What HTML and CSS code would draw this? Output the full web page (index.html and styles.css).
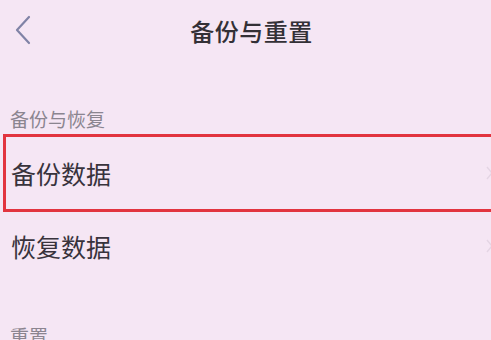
FILE: index.html
```html
<!DOCTYPE html>
<html lang="zh-CN">
<head>
<meta charset="utf-8">
<title>备份与重置</title>
<link rel="stylesheet" href="styles.css">
</head>
<body>
<div class="page">
  <header class="header">
    <span class="back">
      <svg width="20" height="30" viewBox="0 0 20 30"><path d="M15 2 L3 15 L15 28" fill="none" stroke="#8083a6" stroke-width="2.2" stroke-linecap="round" stroke-linejoin="round"/></svg>
    </span>
    <h1 class="title">备份与重置</h1>
    <span class="spacer"></span>
  </header>

  <div class="section-label first">备份与恢复</div>
  <div class="row row-selected">
    <span class="row-text">备份数据</span>
    <svg class="chev" width="8" height="16" viewBox="0 0 8 16"><path d="M2 2 L7 8 L2 14" fill="none" stroke="#e4d5e4" stroke-width="1.4"/></svg>
  </div>
  <div class="row row-plain">
    <span class="row-text">恢复数据</span>
    <svg class="chev" width="8" height="16" viewBox="0 0 8 16"><path d="M2 2 L7 8 L2 14" fill="none" stroke="#e4d5e4" stroke-width="1.4"/></svg>
  </div>

  <div class="section-label second">重置</div>
</div>
</body>
</html>
```
FILE: styles.css
```css
html, body {
  margin: 0;
  padding: 0;
}
body {
  background: #f5e6f4;
  font-family: "Noto Sans CJK SC", "Noto Sans", sans-serif;
  color: #2f2b33;
  overflow: hidden;
}
.page {
  width: 491px;
  height: 340px;
  overflow: hidden;
}
.header {
  height: 62px;
  display: grid;
  grid-template-columns: 60px 1fr 48px;
  align-items: center;
}
.back {
  display: flex;
  align-items: center;
  padding-left: 14px;
  padding-bottom: 2px;
}
.title {
  margin: 0;
  text-align: center;
  font-size: 24px;
  font-weight: 500;
  color: #333036;
  line-height: 62px;
  letter-spacing: 0.5px;
}
.section-label {
  font-size: 19px;
  line-height: 24px;
  color: #8b8590;
  padding-left: 10px;
}
.section-label.first {
  margin-top: 45px;
}
.section-label.second {
  margin-top: 44px;
}
.row {
  display: flex;
  align-items: center;
  justify-content: space-between;
}
.row-text {
  font-size: 25px;
  color: #38333c;
}
.row-selected {
  margin-top: 3px;
  margin-left: 3px;
  height: 72px;
  border: 3px solid #e2343f;
  border-right: none;
  padding-left: 5px;
  padding-right: 0;
}
.row-plain {
  height: 68px;
  padding-left: 11px;
}
.chev {
  margin-right: -2px;
}
```
